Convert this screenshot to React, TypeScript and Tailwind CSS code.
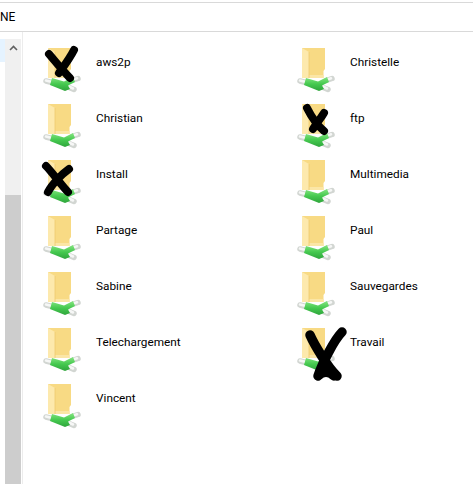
import React from 'react';

interface Share {
  name: string;
  marks?: string;
  markWidth?: number;
}

const shares: Share[] = [
  { name: 'aws2p', marks: 'M7 8 C12 14 22 26 28 32 M32 4 C28 12 22 20 17 27', markWidth: 8 },
  { name: 'Christelle' },
  { name: 'Christian' },
  { name: 'ftp', marks: 'M11 6 C15 14 22 24 28 29 M28 11 C25 16 20 22 17 27', markWidth: 8 },
  { name: 'Install', marks: 'M4 8 C10 14 20 28 26 34 M27 11 C20 16 10 26 6 34', markWidth: 8 },
  { name: 'Multimedia' },
  { name: 'Partage' },
  { name: 'Paul' },
  { name: 'Sabine' },
  { name: 'Sauvegardes' },
  { name: 'Telechargement' },
  { name: 'Travail', marks: 'M14 9 C18 18 32 42 41 50 M46 6 C38 14 26 38 22 50 M22 50 C28 44 34 46 38 50', markWidth: 9.5 },
  { name: 'Vincent' },
];

const ShareIcon = ({ marks, markWidth }: { marks?: string; markWidth?: number }) => (
  <svg width="40" height="48" viewBox="0 0 40 48" className="shrink-0 overflow-visible">
    <defs>
      <linearGradient id="pipe" x1="0" y1="0" x2="0" y2="1">
        <stop offset="0" stopColor="#86e581" />
        <stop offset="0.5" stopColor="#45c94f" />
        <stop offset="1" stopColor="#2fa53c" />
      </linearGradient>
    </defs>
    <path d="M6 2 H29 V23 L27.5 25 V32 H6 Z" fill="#f8da84" />
    <path d="M13 29 H27.5 V32 H13 Z" fill="#fbe6a6" />
    <path d="M6 2 L13 6 V32 H6 Z" fill="#fde9ad" />
    <path d="M13 6 V32" stroke="#edc96f" strokeWidth="0.8" />
    <path d="M4 35 L10 36.5" stroke="#d2d6d2" strokeWidth="5.5" strokeLinecap="round" />
    <path d="M30 34.5 L36 32.5" stroke="#d2d6d2" strokeWidth="5.5" strokeLinecap="round" />
    <path d="M26 41 L32 43.5" stroke="#d2d6d2" strokeWidth="5.5" strokeLinecap="round" />
    <path d="M4 34.5 L9 35.7" stroke="#f6f7f6" strokeWidth="2.6" strokeLinecap="round" />
    <path d="M30 34 L35 32.3" stroke="#f6f7f6" strokeWidth="2.6" strokeLinecap="round" />
    <path d="M27 40.5 L31 42.5" stroke="#f6f7f6" strokeWidth="2.6" strokeLinecap="round" />
    <path d="M10 32 L22 35.5 L31 31 L33 36 L26 39.5 L28 43 L23 45 L8 39 Z" fill="url(#pipe)" />
    {marks && (
      <path d={marks} fill="none" stroke="#000" strokeWidth={markWidth} strokeLinecap="round" strokeLinejoin="round" />
    )}
  </svg>
);

export default function App() {
  return (
    <div className="w-[473px] h-[484px] overflow-hidden bg-white flex flex-col font-['Roboto',sans-serif] text-[11.8px] text-[#000]">
      <div className="h-[30px] shrink-0 mt-[2px] border-t-[1px] border-b-[1px] border-[#d9d9d9] flex items-center overflow-hidden">
        <span className="text-[12px] leading-none">NE</span>
      </div>
      <div className="flex flex-1 min-h-0">
        <div className="w-[5px] shrink-0 pt-[7px]">
          <div className="h-[23px] bg-[#e5f3ff]" />
        </div>
        <div className="w-[16px] shrink-0 mt-[7px] bg-[#f0f0f0] flex flex-col">
          <div className="h-[156px] flex justify-center pt-[6px]">
            <svg width="9" height="6" viewBox="0 0 9 6">
              <path d="M1 5 L4.5 1.5 L8 5" fill="none" stroke="#606060" strokeWidth="1.6" />
            </svg>
          </div>
          <div className="flex-1 bg-[#cdcdcd]" />
        </div>
        <div className="w-[1px] shrink-0 ml-[1px] bg-[#ececec]" />
        <div className="flex-1 pl-[19px] pt-[14px] grid grid-cols-[254px_1fr] auto-rows-[56px]">
          {shares.map((share) => (
            <div key={share.name} className="flex items-start gap-[14px]">
              <ShareIcon marks={share.marks} markWidth={share.markWidth} />
              <span className="mt-[6px] leading-[20px] whitespace-nowrap">{share.name}</span>
            </div>
          ))}
        </div>
      </div>
    </div>
  );
}
